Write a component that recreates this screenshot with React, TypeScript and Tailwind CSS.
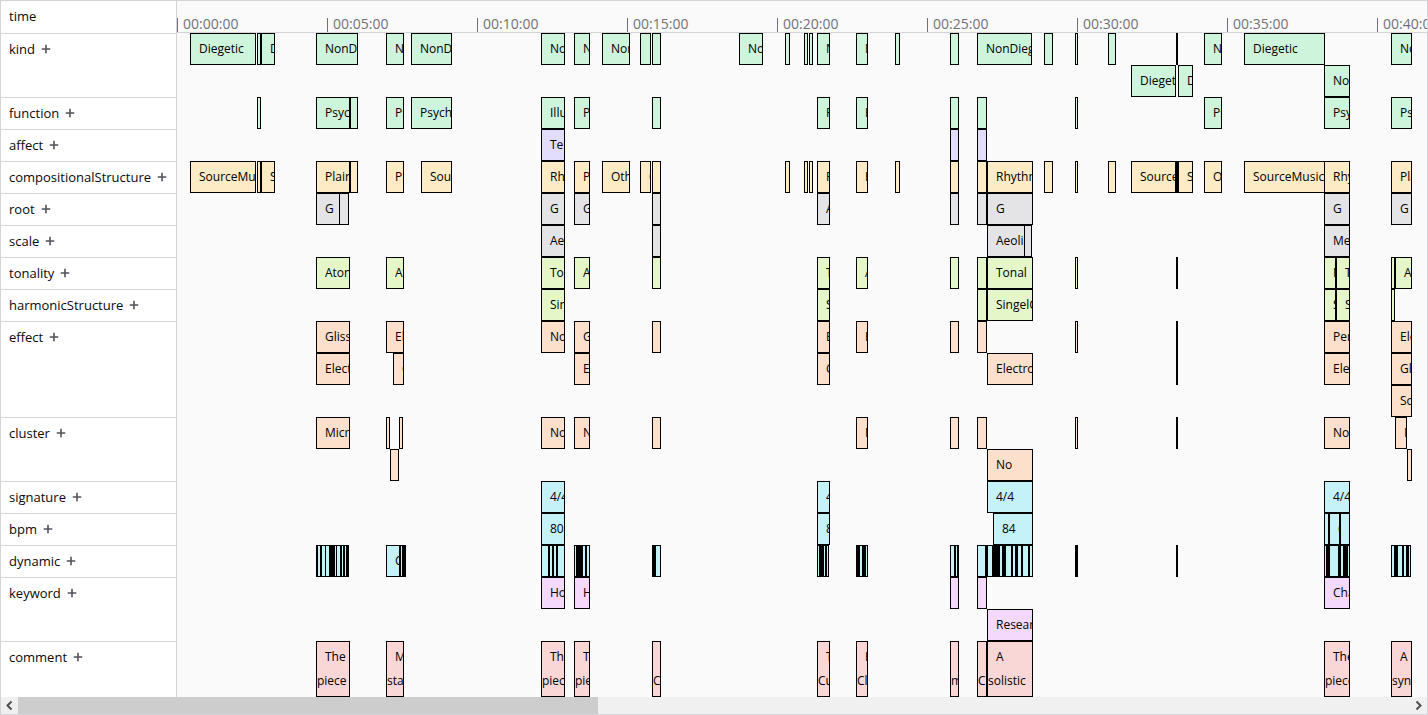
import React from "react";

// [start, end, label] on the timeline scale
type Segment = [number, number, string?];

interface Row {
  name: string;
  color: string;
  lanes: Segment[][];
  height?: string;
}

// Scale value at which 00:00:00 sits
const ORIGIN = 177;

const TICKS = [
  "00:00:00",
  "00:05:00",
  "00:10:00",
  "00:15:00",
  "00:20:00",
  "00:25:00",
  "00:30:00",
  "00:35:00",
  "00:40:00",
];

const GREEN = "bg-[#cff4dc]";
const VIOLET = "bg-[#e3ddfd]";
const AMBER = "bg-[#fcebc5]";
const GRAY = "bg-[#e4e4e6]";
const LIME = "bg-[#e5f7c9]";
const ORANGE = "bg-[#fce0cb]";
const CYAN = "bg-[#c5f1f8]";
const PURPLE = "bg-[#f4d9fc]";
const RED = "bg-[#fad7d7]";

const ROWS: Row[] = [
  {
    name: "kind",
    color: GREEN,
    lanes: [
      [
        [190, 256, "Diegetic"], [257, 261], [261, 275, "Diegetic"], [316, 358, "NonDiegetic"],
        [386, 404, "NonDiegetic"], [411, 452, "NonDiegetic"], [541, 565, "NonDiegetic"],
        [574, 590, "NonDiegetic"], [602, 630, "NonDiegetic"], [640, 651], [652, 661],
        [739, 763, "NonDiegetic"], [785, 790], [804, 808], [809, 813], [817, 830, "NonDiegetic"],
        [856, 868, "NonDiegetic"], [895, 900], [950, 959], [977, 1032, "NonDiegetic"],
        [1044, 1053], [1075, 1078], [1108, 1116], [1176, 1178], [1204, 1222, "NonDiegetic"],
        [1244, 1325, "Diegetic"], [1391, 1412, "NonDiegetic"],
      ],
      [[1131, 1176, "Diegetic"], [1178, 1193, "Diegetic"], [1324, 1350, "NonDiegetic"]],
    ],
  },
  {
    name: "function",
    color: GREEN,
    lanes: [
      [
        [257, 261], [316, 350, "Psychological"], [350, 358], [386, 404, "Psychological"],
        [411, 452, "Psychological"], [541, 565, "Illustrative"], [574, 590, "Psychological"],
        [652, 661], [817, 830, "Psychological"], [856, 868, "Psychological"], [950, 959],
        [977, 987], [1075, 1078], [1204, 1222, "Psychological"], [1324, 1350, "Psychological"],
        [1391, 1412, "Psychological"],
      ],
    ],
  },
  {
    name: "affect",
    color: VIOLET,
    lanes: [[[541, 565, "Tension"], [950, 959], [977, 987]]],
  },
  {
    name: "compositionalStructure",
    color: AMBER,
    lanes: [
      [
        [190, 256, "SourceMusic"], [257, 261], [261, 275, "SourceMusic"], [316, 350, "Plain"],
        [350, 358], [386, 404, "Plain"], [421, 452, "SourceMusic"], [541, 565, "Rhythmic"],
        [574, 590, "Plain"], [602, 630, "Other"], [640, 651, "Other"], [652, 661], [785, 790],
        [804, 808], [809, 813], [817, 830, "Rhythmic"], [856, 868, "Plain"], [895, 900],
        [950, 959], [977, 987], [987, 1033, "Rhythmic"], [1044, 1053], [1075, 1078],
        [1108, 1116], [1131, 1176, "SourceMusic"], [1176, 1178],
        [1178, 1193, "SourceMusic"], [1204, 1222, "Other"], [1244, 1325, "SourceMusic"],
        [1324, 1350, "Rhythmic"], [1391, 1412, "Plain"],
      ],
    ],
  },
  {
    name: "root",
    color: GRAY,
    lanes: [
      [
        [316, 340, "G"], [339, 349], [541, 565, "G"], [574, 590, "G"], [652, 661],
        [817, 830, "A"], [950, 959], [977, 987], [987, 1033, "G"], [1324, 1350, "G"],
        [1391, 1412, "G"],
      ],
    ],
  },
  {
    name: "scale",
    color: GRAY,
    lanes: [
      [[541, 565, "Aeolian"], [652, 661], [987, 1025, "Aeolian"], [1024, 1032], [1324, 1350, "Melodic"]],
    ],
  },
  {
    name: "tonality",
    color: LIME,
    lanes: [
      [
        [316, 350, "Atonal"], [386, 404, "Atonal"], [541, 565, "Tonal"], [574, 590, "Atonal"],
        [652, 661], [817, 830, "Tonal"], [856, 868, "Atonal"], [950, 959], [977, 987],
        [987, 1033, "Tonal"], [1075, 1078], [1176, 1178], [1324, 1336, "Neutral"],
        [1336, 1350, "Tonal"], [1391, 1395], [1395, 1412, "Atonal"],
      ],
    ],
  },
  {
    name: "harmonicStructure",
    color: LIME,
    lanes: [
      [
        [541, 565, "SingelChord"], [817, 830, "SingelChord"], [977, 987],
        [987, 1033, "SingelChord"], [1324, 1336, "SingelChord"], [1336, 1350, "SingelChord"],
        [1391, 1395],
      ],
    ],
  },
  {
    name: "effect",
    color: ORANGE,
    lanes: [
      [
        [316, 350, "Glissando"], [386, 404, "Electronic"], [541, 565, "No"],
        [574, 590, "Glissando"], [652, 661], [817, 830, "Electronic"], [856, 868, "Percussive"],
        [950, 959], [977, 987], [1075, 1078], [1176, 1178], [1324, 1350, "Percussive"],
        [1391, 1412, "Electronic"],
      ],
      [
        [316, 350, "Electronic"], [393, 404, "Glissando"], [574, 590, "Electronic"],
        [817, 830, "Glissando"], [987, 1033, "Electronic"], [1176, 1178],
        [1324, 1350, "Electronic"], [1391, 1412, "Glissando"],
      ],
      [[1391, 1412, "Sound"]],
    ],
  },
  {
    name: "cluster",
    color: ORANGE,
    lanes: [
      [
        [316, 350, "Micro"], [386, 390], [399, 403], [541, 565, "No"], [574, 590, "No"],
        [652, 661], [856, 868, "No"], [950, 959], [977, 987], [1075, 1078], [1176, 1178],
        [1324, 1350, "No"], [1395, 1407, "No"],
      ],
      [[390, 399], [987, 1033, "No"], [1407, 1412]],
    ],
  },
  {
    name: "signature",
    color: CYAN,
    lanes: [[[541, 565, "4/4"], [817, 830, "4/4"], [987, 1033, "4/4"], [1324, 1350, "4/4"]]],
  },
  {
    name: "bpm",
    color: CYAN,
    lanes: [
      [[541, 565, "80"], [817, 830, "80"], [993, 1033, "84"], [1324, 1329], [1329, 1340, "60"], [1340, 1350]],
    ],
  },
  {
    name: "dynamic",
    color: CYAN,
    lanes: [
      [
        [316, 318], [317, 321], [321, 326], [325, 330], [330, 332], [332, 334], [334, 337],
        [336, 341], [341, 344], [344, 347], [347, 349],
        [386, 400, "Crescendo"], [400, 403], [403, 405], [404, 406],
        [541, 549], [549, 553], [553, 557], [557, 565],
        [574, 577], [577, 579], [579, 581], [581, 583], [582, 586], [586, 590],
        [652, 654], [654, 656], [655, 661],
        [817, 820], [820, 822], [822, 824], [823, 826], [826, 829],
        [856, 858], [858, 860], [859, 863], [863, 865], [865, 868],
        [950, 955], [955, 958], [957, 959],
        [977, 986], [985, 987], [987, 993], [993, 995], [995, 997], [997, 999], [999, 1003],
        [1003, 1005], [1005, 1012], [1012, 1016], [1016, 1018], [1017, 1022], [1022, 1029],
        [1029, 1033],
        [1075, 1077], [1076, 1078], [1176, 1178],
        [1324, 1327], [1327, 1329], [1329, 1339], [1339, 1341], [1340, 1344], [1344, 1346],
        [1346, 1348], [1347, 1350],
        [1391, 1395], [1395, 1397], [1397, 1403], [1403, 1407], [1407, 1409], [1408, 1411],
      ],
    ],
  },
  {
    name: "keyword",
    color: PURPLE,
    lanes: [
      [[541, 565, "Horror"], [574, 590, "Horror"], [950, 959], [977, 987], [1324, 1350, "Chase"]],
      [[987, 1033, "Research"]],
    ],
  },
  {
    name: "comment",
    color: RED,
    height: "h-14",
    lanes: [
      [
        [316, 350, "The piece"], [386, 404, "Music starts"], [541, 565, "The piece"],
        [574, 590, "The piece"], [652, 661, "The Cluster"], [817, 830, "The Cue"],
        [856, 868, "High Cluster"], [950, 959, "The music"], [977, 987, "The Cluster"],
        [987, 1033, "A solistic"], [1324, 1350, "The piece"], [1391, 1412, "A synthesizer"],
      ],
    ],
  },
];

function PlusIcon() {
  return (
    <svg viewBox="0 0 16 16" className="size-4" fill="none" stroke="#52525b" strokeWidth="1.6" aria-hidden="true">
      <path d="M8 3.75v8.5M3.75 8h8.5" />
    </svg>
  );
}

function SegmentBox({ segment, color }: { segment: Segment; color: string }) {
  const [start, end, label] = segment;
  return (
    <div
      className={`absolute inset-y-0 overflow-hidden border border-black py-[3px] text-[12px] leading-6 text-black ${color}`}
      style={{ left: start - ORIGIN, width: end - start }}
    >
      {label && <span className="pl-2">{label}</span>}
    </div>
  );
}

function TimelineRow({ row }: { row: Row }) {
  return (
    <div className="flex">
      <div className="flex w-44 shrink-0 items-start border-t border-r border-zinc-300 bg-white pl-2">
        <div className="flex h-[30px] items-center gap-[3px]">
          <span className="text-[13px] leading-5 text-zinc-950">{row.name}</span>
          <button type="button" aria-label={`Show more ${row.name}`} className="flex items-center">
            <PlusIcon />
          </button>
        </div>
      </div>
      <div className="min-w-0 flex-1 overflow-hidden">
        {row.lanes.map((lane, i) => (
          <div key={i} className={`relative ${row.height ?? "h-8"}`}>
            {lane.map((segment, j) => (
              <SegmentBox key={j} segment={segment} color={row.color} />
            ))}
          </div>
        ))}
      </div>
    </div>
  );
}

function ScrollBar() {
  return (
    <div className="flex h-[17px] bg-[#f0f0f0]">
      <button type="button" aria-label="Scroll left" className="flex w-[17px] items-center justify-center">
        <svg viewBox="0 0 17 17" className="size-[17px]" fill="none" stroke="#505050" strokeWidth="2" aria-hidden="true">
          <path d="M10.5 4.5l-4 4 4 4" />
        </svg>
      </button>
      <div className="min-w-0 flex-1">
        <div className="h-full w-[41.7%] bg-[#cdcdcd]" />
      </div>
      <button type="button" aria-label="Scroll right" className="flex w-[17px] items-center justify-center">
        <svg viewBox="0 0 17 17" className="size-[17px]" fill="none" stroke="#505050" strokeWidth="2" aria-hidden="true">
          <path d="M6.5 4.5l4 4-4 4" />
        </svg>
      </button>
    </div>
  );
}

export default function App() {
  return (
    <main className="overflow-hidden border border-zinc-300 bg-[#fafafa] font-['Open_Sans','Noto_Sans',sans-serif]">
      <div className="flex h-8">
        <div className="flex w-44 shrink-0 items-center border-r border-zinc-300 bg-white pb-0.5 pl-2 text-[13px] leading-5 text-zinc-950">
          time
        </div>
        <div className="flex min-w-0 flex-1 items-end overflow-hidden border-b border-zinc-300">
          {TICKS.map((tick) => (
            <div
              key={tick}
              className="h-3.5 w-[150px] shrink-0 border-l border-zinc-500 pl-[5px] text-[14px] leading-3 text-zinc-500"
            >
              {tick}
            </div>
          ))}
        </div>
      </div>
      {ROWS.map((row) => (
        <TimelineRow key={row.name} row={row} />
      ))}
      <ScrollBar />
    </main>
  );
}
